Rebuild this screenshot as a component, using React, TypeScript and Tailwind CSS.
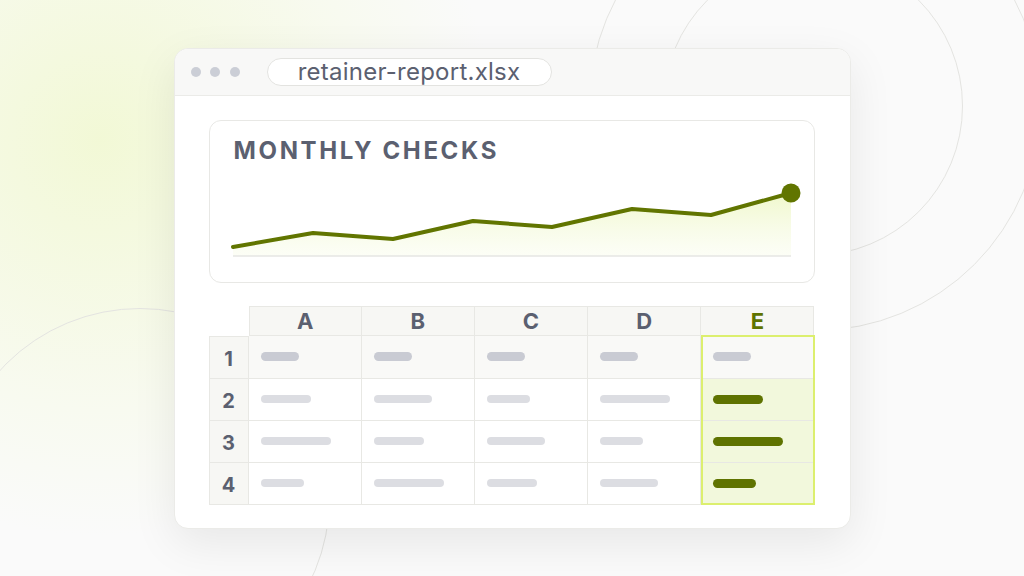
const font = { fontFamily: "Inter, 'Noto Sans', sans-serif" };

const columns = ["A", "B", "C", "D", "E"];

// bar widths per row, columns A..E
const rows = [
  [38, 38, 38, 38, 38],
  [50, 58, 43, 70, 50],
  [70, 50, 58, 43, 70],
  [43, 70, 50, 58, 43],
];

function Chart() {
  const pts: [number, number][] = [
    [23, 76],
    [103, 62],
    [183, 68],
    [263, 50],
    [342, 56],
    [422, 38],
    [501, 44],
    [581, 22],
  ];
  const line = pts.map((p) => p.join(",")).join(" ");
  const area = `${line} 581,85 23,85`;
  return (
    <svg width="604" height="100" viewBox="0 0 604 100" className="mt-[8px] block">
      <defs>
        <linearGradient id="fill" x1="0" y1="0" x2="0" y2="1">
          <stop offset="0" stopColor="#eef7c6" stopOpacity="0.9" />
          <stop offset="1" stopColor="#f6fbe2" stopOpacity="0.3" />
        </linearGradient>
      </defs>
      <polygon points={area} fill="url(#fill)" />
      <line x1="23" y1="85" x2="581" y2="85" stroke="#e6e6e3" strokeWidth="1.5" />
      <polyline
        points={line}
        fill="none"
        stroke="#617500"
        strokeWidth="4"
        strokeLinecap="round"
        strokeLinejoin="round"
      />
      <circle cx="581" cy="22" r="9.5" fill="#617500" />
    </svg>
  );
}

function Sheet() {
  return (
    <div className="relative mt-[23px] w-[606px]">
      <div className="grid grid-cols-[40px_repeat(5,1fr)]">
        <div className="h-[30px]" />
        {columns.map((c, i) => (
          <div
            key={c}
            className={`flex h-[30px] items-center justify-center border-y border-r border-[#e8e8e4] bg-[#f7f7f4] text-[22px] font-bold leading-none ${
              i === 0 ? "border-l" : ""
            } ${c === "E" ? "text-[#5f7300]" : "text-[#5b6070]"}`}
          >
            {c}
          </div>
        ))}
        {rows.map((widths, r) => (
          <div key={r} className="contents">
            <div
              className={`flex h-[42px] items-center justify-center border-x border-b border-[#e8e8e4] bg-[#f7f7f4] pt-[3px] text-[20px] font-bold leading-none text-[#5b6070] ${
                r === 0 ? "h-[43px] border-t" : ""
              }`}
            >
              {r + 1}
            </div>
            {widths.map((w, c) => {
              const green = c === 4 && r > 0;
              return (
                <div
                  key={c}
                  className={`flex items-center border-r border-b border-[#e8e8e4] pl-[12px] ${
                    r === 0 ? "h-[43px] bg-[#f9f9f7]" : "h-[42px]"
                  } ${green ? "bg-[#f2f8dc]" : ""} ${r > 0 && !green ? "bg-white" : ""}`}
                >
                  <div
                    className={`rounded-full ${
                      green
                        ? "h-[9px] bg-[#5f7300]"
                        : r === 0
                        ? "h-[9px] bg-[#c9cbd3]"
                        : "h-[8px] bg-[#dcdde2]"
                    }`}
                    style={{ width: w }}
                  />
                </div>
              );
            })}
          </div>
        ))}
      </div>
      <div className="pointer-events-none absolute left-[492px] top-[29px] h-[170px] w-[114px] border-2 border-[#dcef6e]" />
    </div>
  );
}

export default function App() {
  return (
    <div
      className="relative flex h-[576px] w-[1024px] items-center justify-center overflow-hidden bg-[#fafafa]"
      style={font}
    >
      {/* background decoration */}
      <div className="absolute -left-[300px] -top-[260px] h-[800px] w-[800px] rounded-full bg-[radial-gradient(circle_at_center,rgba(240,248,205,0.8),rgba(245,250,225,0.45)_45%,transparent_70%)]" />
      <div className="absolute left-[663px] -top-[44px] h-[300px] w-[300px] rounded-full border border-[#e4e4e1]" />
      <div className="absolute left-[589px] -top-[121px] h-[452px] w-[452px] rounded-full border border-[#e4e4e1]" />
      <div className="absolute -left-[50px] top-[308px] h-[380px] w-[380px] rounded-full border border-[#e4e4e1]" />

      {/* window */}
      <div className="relative flex h-[481px] w-[677px] flex-col overflow-hidden rounded-[14px] border border-[#ebebe8] bg-white shadow-[0_14px_45px_rgba(0,0,0,0.08)]">
        <div className="flex h-[47px] shrink-0 items-center border-b border-[#ebebe8] bg-[#f8f8f7] pl-[16px]">
          <div className="flex gap-[9.5px]">
            <span className="h-[10px] w-[10px] rounded-full bg-[#cbced6]" />
            <span className="h-[10px] w-[10px] rounded-full bg-[#cbced6]" />
            <span className="h-[10px] w-[10px] rounded-full bg-[#cbced6]" />
          </div>
          <div className="ml-[27px] flex h-[28px] w-[285px] items-center justify-center rounded-full border border-[#e3e3e0] bg-white text-[24px] leading-none tracking-[0.01em] text-[#5b6070]">
            retainer-report.xlsx
          </div>
        </div>

        <div className="flex flex-col px-[34px] pt-[24px]">
          <div className="h-[163px] w-[606px] rounded-[12px] border border-[#e8e8e5] bg-white">
            <div className="px-[24px] pt-[18px] text-[24px] font-bold leading-[24px] tracking-[0.11em] text-[#5b6070]">
              MONTHLY CHECKS
            </div>
            <Chart />
          </div>
          <Sheet />
        </div>
      </div>
    </div>
  );
}
